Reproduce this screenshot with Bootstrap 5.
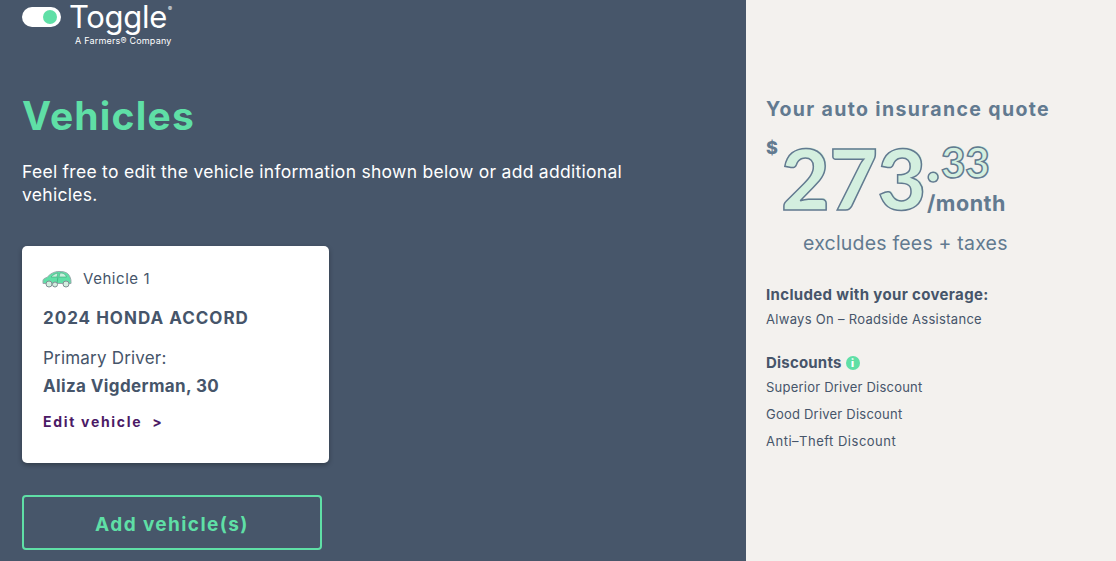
<!doctype html>
<html lang="en"><head><meta charset="utf-8"><title>Vehicles</title>
<link href="https://cdn.jsdelivr.net/npm/bootstrap@5.3.0/dist/css/bootstrap.min.css" rel="stylesheet">
<style>
html,body{height:561px;overflow:hidden}
body{font-family:Inter,"Liberation Sans",sans-serif;background:#f3f1ee;color:#46556a}
.shell{height:561px}
.main-pane{width:746px;background:#47566a;padding:0 22px;color:#fff}
.side-pane{width:370px;padding:97px 16px 0 20px;color:#46556a}
.brand{height:48px;padding-top:4px}
.brand-row{height:26px}
.brand-name{font-size:31px;line-height:26px;font-weight:400;letter-spacing:-.3px;margin-left:8px}
.brand-name sup{font-size:6px;top:-17px;position:relative;vertical-align:baseline;letter-spacing:0;margin-left:1px}
.brand-sub{font-size:9px;line-height:10px;margin:6px 0 0 53px;letter-spacing:.2px}
.toggle-pill{width:39px;height:20px;border-radius:10px;background:#fff;padding:3px 4px 3px 0}
.toggle-dot{width:14px;height:14px;border-radius:50%;background:#5fdfa6}
.page-title{font-size:39px;line-height:46px;font-weight:700;color:#5fdfa6;margin:45px 0 0;letter-spacing:1.2px}
.intro{font-size:17.500px;line-height:23px;margin:21px 0 0;width:640px;letter-spacing:.28px}
.vehicle-box{width:307px;height:217px;margin-top:40px;border:0;border-radius:5px;box-shadow:0 2px 5px rgba(0,0,0,.3);padding:21px 21px;color:#46556a}
.veh-label{font-size:15px;line-height:24px;gap:11px;letter-spacing:.55px}
.car-icon{margin-left:-1px}
.veh-name{font-size:17px;line-height:24px;font-weight:700;margin-top:15px;letter-spacing:1px}
.veh-driver{font-size:17px;line-height:24px;margin-top:16px;letter-spacing:.2px}
.veh-person{font-size:17px;line-height:24px;font-weight:700;margin-top:4px;letter-spacing:.37px}
.veh-edit{font-size:14px;line-height:20px;font-weight:700;color:#4b1a66;text-decoration:none;letter-spacing:1.7px;margin-top:14px;gap:10px}
.add-btn{width:300px;height:55px;margin-top:32px;padding:5px 0 0;border:2px solid #5fdfa6;border-radius:4px;color:#5fdfa6;font-size:19px;font-weight:700;background:transparent;letter-spacing:1.4px}
.quote-title{font-size:19.500px;line-height:24px;font-weight:700;color:#627a90;letter-spacing:1.36px;white-space:nowrap}
.price{height:86px;position:relative;margin-top:15px;color:#627a90}
.cur{position:absolute;left:0;top:0;font-size:18px;line-height:24px;font-weight:800}
.outline{color:#d3efdf;-webkit-text-stroke:1.5px #627a90;text-shadow:1px -1px 0 #d3efdf;font-weight:900;position:absolute;font-family:Lato,sans-serif}
.big{left:15px;top:-3px;font-size:84px;line-height:90px;letter-spacing:-.5px}
.dot{left:160px;top:-7px;font-size:60px;line-height:60px}
.cents{left:175px;top:6px;font-size:42px;line-height:40px}
.per{position:absolute;left:161px;top:53px;font-size:21.500px;line-height:28px;font-weight:700;letter-spacing:.5px}
.fees{font-size:19.500px;line-height:26px;color:#627a90;margin:8px 0 0 37px;letter-spacing:.2px}
.sec-head{font-size:15px;line-height:20px;font-weight:700;letter-spacing:.2px;gap:4px}
.head-wide{letter-spacing:.35px}
.sec-item{font-size:13px;line-height:20px;margin:7px 0 0;letter-spacing:.22px}
.item-wide{letter-spacing:.3px}.item-wider{letter-spacing:.5px}
.info-dot{width:14px;height:14px;border-radius:50%;background:#5fdfa6;color:#fff;font-size:10px;font-weight:900;line-height:14px;text-align:center}
.gap-lg{margin-top:29px}.gap-md{margin-top:24px}.gap-sm{margin-top:4px}
</style></head>
<body>
<div class="d-flex shell">
 <main class="main-pane">
  <div class="brand">
   <div class="d-flex align-items-center brand-row">
    <div class="toggle-pill d-flex justify-content-end"><div class="toggle-dot"></div></div>
    <div class="brand-name">Toggle<sup>®</sup></div>
   </div>
   <div class="brand-sub">A Farmers® Company</div>
  </div>
  <h1 class="page-title">Vehicles</h1>
  <p class="intro">Feel free to edit the vehicle information shown below or add additional vehicles.</p>
  <div class="card vehicle-box">
   <div class="d-flex align-items-center veh-label">
    <svg class="car-icon" width="30" height="18" viewBox="0 0 30 18"><path d="M1 13.500V10.500c0-1.500 2-2.500 4-3C8 4 12 1.500 17 1.500c4 0 7 .5 9 2.500 2 2 3 5 3 7.500v2H1z" fill="#5fdfa6" stroke="#9aa8ac" stroke-width="1"/><path d="M9 7c2-2 4-3.500 7-4l-1 4H9zM18 3c3 0 5 .5 6.500 4H17L18 3z" fill="#c9f0dd" stroke="#3fa57a" stroke-width=".6"/><path d="M16 7l-1 6" stroke="#3fa57a" stroke-width=".7"/><circle cx="7" cy="14" r="3" fill="#d3efdf" stroke="#7f8f94"/><circle cx="24" cy="14" r="3" fill="#d3efdf" stroke="#7f8f94"/><circle cx="13" cy="14.500" r="2.500" fill="#d3efdf" stroke="#7f8f94"/></svg>
    <span>Vehicle 1</span>
   </div>
   <div class="veh-name">2024 HONDA ACCORD</div>
   <div class="veh-driver">Primary Driver:</div>
   <div class="veh-person">Aliza Vigderman, 30</div>
   <a href="#" class="veh-edit d-flex"><span>Edit vehicle</span><span>&gt;</span></a>
  </div>
  <button class="btn add-btn d-block">Add vehicle(s)</button>
 </main>
 <aside class="side-pane">
  <div class="quote-title">Your auto insurance quote</div>
  <div class="price">
   <span class="cur">$</span>
   <span class="outline big">273</span>
   <span class="outline dot">.</span>
   <span class="outline cents">33</span>
   <span class="per">/month</span>
  </div>
  <div class="fees">excludes fees + taxes</div>
  <div class="sec-head head-wide gap-lg">Included with your coverage:</div>
  <p class="sec-item item-wide gap-sm">Always On – Roadside Assistance</p>
  <div class="sec-head d-flex align-items-center gap-md"><span>Discounts</span><span class="info-dot">i</span></div>
  <p class="sec-item gap-sm">Superior Driver Discount</p>
  <p class="sec-item">Good Driver Discount</p>
  <p class="sec-item item-wider">Anti–Theft Discount</p>
 </aside>
</div>
<script src="https://cdn.jsdelivr.net/npm/bootstrap@5.3.0/dist/js/bootstrap.bundle.min.js"></script>
</body></html>
